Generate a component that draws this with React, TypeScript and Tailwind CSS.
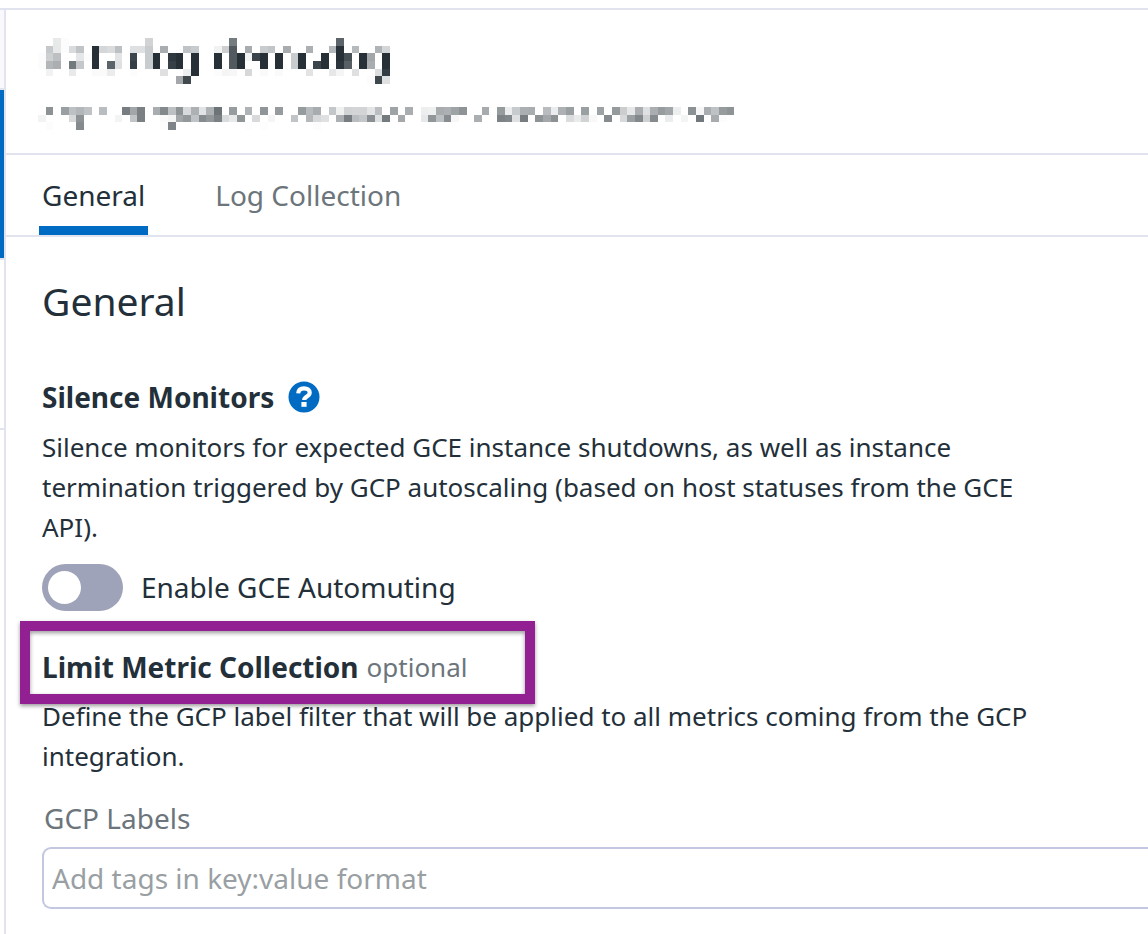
import { useState } from "react";

// Each entry is a row of the mosaic: row index -> "column:level" cells, level in hex.
const mosaic: [number, string][] = [
  [0, "2:e9 3:fc 14:d3 25:7c 39:64"],
  [1, "1:c9 2:e8 3:fc 4:db 5:c4 7:30 8:d6 9:db 10:c0 12:e0 13:e0 14:cc 16:ad 19:c3 20:cb 23:f2 24:cf 25:5a 27:ac 29:cc 30:c5 32:ac 35:b0 38:b8 39:32 41:ba 44:b3 45:d5"],
  [2, "0:fc 1:cf 2:c0 5:e6 6:fc 7:30 10:e4 12:45 14:cc 15:30 17:38 18:30 20:30 23:30 25:5a 26:30 27:f3 28:44 29:30 31:30 33:cc 34:30 37:30 39:30 40:50 42:30 43:a6 45:30"],
  [3, "0:fc 1:b7 2:af 4:7a 5:c8 7:30 9:64 10:e0 12:3e 14:cc 15:30 17:40 18:30 20:30 23:30 25:5a 26:30 29:30 31:30 33:cc 34:30 36:45 37:30 39:35 40:60 42:30 43:ad 45:30"],
  [4, "1:f2 4:e9 7:fa 8:fa 9:ec 12:fc 16:e0 19:ee 20:30 23:fc 24:f5 25:f7 27:d8 29:fa 31:fa 35:e3 38:e7 39:f5 41:e0 44:dd 45:3c"],
  [5, "18:a8 19:49 43:fc 44:48 45:e0"],
  [9, "1:92 3:9f 4:c1 5:b7 6:c3 8:bd 11:7d 12:a6 13:80 15:ad 16:88 17:c0 18:93 19:d9 20:b1 21:e3 22:b2 23:74 25:9c 27:b3 29:95 31:9b 34:9b 35:bb 36:ac 38:c7 39:f0 40:d3 41:d5 42:d4 43:e4 44:be 46:a3 48:ad 50:ee 51:f0 52:ac 53:b0 54:a3 55:93 58:ab 60:9b 61:ed 62:cb 63:af 64:ad 66:bc 67:ec 68:b1 69:9f 71:9f 73:a2 75:9a 76:cd 77:e7 78:ae 79:e0 80:ae 81:9c 82:a6 83:ee 85:91 86:f6 87:ad 88:c2 89:9b 90:93"],
  [10, "0:f3 4:d9 5:92 10:f4 12:c5 13:80 16:f9 17:f4 18:a6 19:98 20:c3 21:8b 22:98 23:80 24:db 25:e9 26:96 28:d9 30:f5 33:c4 35:b8 36:d9 37:e0 39:b0 40:7d 41:bd 42:c7 43:8f 44:e0 45:7b 47:a9 50:e8 51:96 52:c0 53:8c 54:f7 57:af 60:82 61:87 62:e0 63:7d 65:93 66:a8 67:91 69:dc 70:ea 71:d2 72:f8 74:8b 76:d9 77:a0 78:88 79:d0 80:8b 82:ec 84:f4 86:79 88:ac 89:fc"],
  [11, "1:fc 5:8a 16:fc 17:84 27:fd 29:fd 36:fc"],
];

const CELL = 7.652;

function shade(level: string) {
  const g = parseInt(level, 16);
  const d = 255 - g;
  return `rgb(${Math.round(g - d * 0.05)}, ${g}, ${Math.min(255, Math.round(g + d * 0.03))})`;
}

function RedactedAccount() {
  return (
    <svg role="img" aria-label="Redacted account" width="699" height="92" viewBox="0 0 699 92" shapeRendering="crispEdges" className="block max-w-none">
      {mosaic.flatMap(([row, cells]) =>
        cells.split(" ").map((cell) => {
          const [col, level] = cell.split(":");
          const x = Math.round(Number(col) * CELL);
          const y = Math.round(row * 7.667);
          const right = Math.round((Number(col) + 1) * CELL);
          const bottom = Math.round((row + 1) * 7.667);
          return <rect key={`${row}-${col}`} x={x} y={y} width={right - x} height={bottom - y} fill={shade(level)} />;
        }),
      )}
    </svg>
  );
}

function HelpIcon() {
  return (
    <svg width="32" height="32" viewBox="0 0 32 32" aria-hidden="true" className="block">
      <circle cx="16" cy="16" r="15.5" fill="#006bc2" />
      <path d="M10.2 12.4C10.5 8.6 12.9 7.4 16 7.4c3.4 0 5.7 1.6 5.7 4.3 0 3.9-5.5 3.7-5.5 7.3" fill="none" stroke="#fff" strokeWidth="4.2" />
      <rect x="13.4" y="21" width="5.2" height="4.8" fill="#fff" />
    </svg>
  );
}

export default function App() {
  const [muted, setMuted] = useState(false);
  const [tab, setTab] = useState("General");

  return (
    <div className="flex min-h-screen flex-col overflow-hidden bg-white pt-2 font-['Noto_Sans',sans-serif] text-[#23303a]">
      <div className="flex grow border-t-2 border-[#e1e3ef]">
        <aside className="flex w-1 shrink-0 flex-col">
          <div className="h-20 border-b-2 border-[#e1e3ef] bg-[#f9f9fd]" />
          <div className="h-[168px] bg-[#006bc2]" />
          <div className="h-[172px] border-y-2 border-[#e1e3ef]" />
        </aside>

        <main className="min-w-0 grow border-l-2 border-[#e1e3ef]">
          <header className="border-b-2 border-[#e1e3ef] pt-7 pb-[23px] pl-8">
            <RedactedAccount />
          </header>

          <nav className="flex h-[82px] gap-16 border-b-2 border-[#e1e3ef] pl-[33px] text-[28px]">
            {["General", "Log Collection"].map((name) => (
              <button
                key={name}
                type="button"
                onClick={() => setTab(name)}
                aria-current={tab === name}
                className={
                  tab === name
                    ? "border-b-[9px] border-[#006bc2] px-[3px] pt-2"
                    : "border-b-[9px] border-transparent px-[3px] pt-2 text-[#6c757b]"
                }
              >
                {name}
              </button>
            ))}
          </nav>

          <div className="pt-9 pl-9">
            <h1 className="text-[39px] leading-[56px]">General</h1>

            <section className="mt-10">
              <div className="flex items-center gap-[14px]">
                <h2 className="text-[28px] leading-[56px] font-bold">Silence Monitors</h2>
                <button type="button" aria-label="About silencing monitors">
                  <HelpIcon />
                </button>
              </div>
              <p className="mt-[2px] max-w-[1010px] text-[26px] leading-10">
                Silence monitors for expected GCE instance shutdowns, as well as instance termination triggered by GCP
                autoscaling (based on host statuses from the GCE API).
              </p>
              <label className="mt-4 flex items-center gap-[18px] text-[28px] leading-[48px]">
                <input type="checkbox" role="switch" checked={muted} onChange={() => setMuted(!muted)} className="peer sr-only" />
                <span className="flex h-[47px] w-[81px] items-center rounded-full bg-[#9ea3b9] px-[6px] peer-checked:justify-end peer-checked:bg-[#006bc2]">
                  <span className="size-[33px] rounded-full bg-white" />
                </span>
                Enable GCE Automuting
              </label>
            </section>

            <section className="mt-9">
              <div className="relative flex items-center gap-2">
                <h2 className="text-[28px] leading-10 font-bold">Limit Metric Collection</h2>
                <span className="text-[26px] leading-10 text-[#6c757b]">optional</span>
                <div className="pointer-events-none absolute -top-[26px] -left-[22px] h-[83px] w-[515px] border-[10px] border-[#932092] shadow-[0_2px_4px_rgba(0,0,0,0.4),inset_0_2px_4px_rgba(0,0,0,0.4)]" />
              </div>
              <p className="mt-[9px] max-w-[1010px] text-[26px] leading-10">
                Define the GCP label filter that will be applied to all metrics coming from the GCP integration.
              </p>
              <label htmlFor="labels" className="mt-[18px] block pl-[2px] text-[28px] leading-[48px] text-[#6c757b]">
                GCP Labels
              </label>
              <input
                id="labels"
                type="text"
                placeholder="Add tags in key:value format"
                className="mt-[5px] block h-[62px] w-full rounded-l-[9px] border-2 border-r-0 border-[#c3c7df] px-2 text-[28px] placeholder:text-[#999fa3]"
              />
            </section>
          </div>
        </main>
      </div>
    </div>
  );
}
